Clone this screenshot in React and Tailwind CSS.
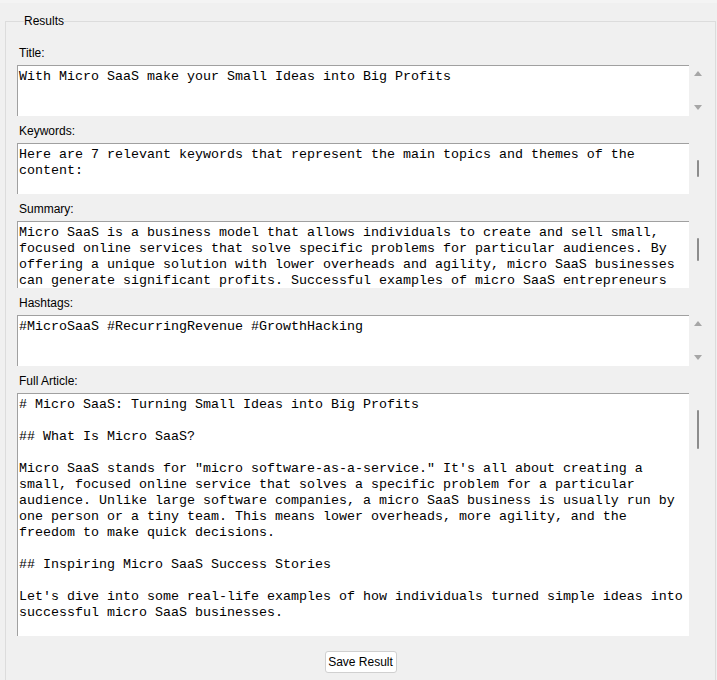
import React from "react";

const mono = { fontFamily: '"Liberation Mono", "Courier New", monospace' };

function Arrows() {
  return (
    <div className="flex h-full w-[17px] flex-col justify-between">
      <div className="flex h-[17px] items-center justify-center">
        <svg width="8" height="5" viewBox="0 0 8 5">
          <polygon points="4,0 8,5 0,5" fill="#a6a6a6" />
        </svg>
      </div>
      <div className="flex h-[17px] items-center justify-center">
        <svg width="8" height="5" viewBox="0 0 8 5">
          <polygon points="0,0 8,0 4,5" fill="#a6a6a6" />
        </svg>
      </div>
    </div>
  );
}

function Thumb({ size }) {
  return (
    <div className="flex h-full w-[17px] flex-col pt-[17px]">
      <div className={`mx-auto w-[2px] rounded-full bg-[#8c8c8c] ${size}`} />
    </div>
  );
}

function Field({ label, lines, height, bar, first }) {
  return (
    <div className="flex flex-col">
      <div className={`pl-[2px] text-[12px] leading-4 text-black ${first ? "pt-px" : "pt-[7px]"} pb-[4px]`}>
        {label}
      </div>
      <div className={`flex ${height}`}>
        <div
          className="h-full w-[672px] overflow-hidden whitespace-pre border-l border-t border-[#a0a0a0] bg-white pl-px pt-[3px] text-[13.33px] leading-4 text-black"
          style={mono}
        >
          {lines.join("\n")}
        </div>
        {bar}
      </div>
    </div>
  );
}

export default function App() {
  return (
    <div
      className="h-[680px] w-[717px] overflow-hidden bg-[#f0f0f0]"
      style={{ fontFamily: '"Liberation Sans", Arial, sans-serif' }}
    >
      <div className="h-[3px] bg-[#f4f4f4]" />
      <fieldset className="ml-[5px] mt-[10px] w-[711px] border border-[#dcdcdc] pb-[20px] pl-[11px]">
        <legend className="ml-[7px] text-[12px] leading-4 text-black">Results</legend>
        <div className="flex flex-col pt-[15px]">
          <Field
            first
            label="Title:"
            height="h-[51px]"
            bar={<Arrows />}
            lines={["With Micro SaaS make your Small Ideas into Big Profits"]}
          />
          <Field
            label="Keywords:"
            height="h-[51px]"
            bar={<Thumb size="h-[17px]" />}
            lines={[
              "Here are 7 relevant keywords that represent the main topics and themes of the",
              "content:",
            ]}
          />
          <Field
            label="Summary:"
            height="h-[67px]"
            bar={<Thumb size="h-[23px]" />}
            lines={[
              "Micro SaaS is a business model that allows individuals to create and sell small,",
              "focused online services that solve specific problems for particular audiences. By",
              "offering a unique solution with lower overheads and agility, micro SaaS businesses",
              "can generate significant profits. Successful examples of micro SaaS entrepreneurs",
            ]}
          />
          <Field
            label="Hashtags:"
            height="h-[51px]"
            bar={<Arrows />}
            lines={["#MicroSaaS #RecurringRevenue #GrowthHacking"]}
          />
          <Field
            label="Full Article:"
            height="h-[243px]"
            bar={<Thumb size="h-[39px]" />}
            lines={[
              "# Micro SaaS: Turning Small Ideas into Big Profits",
              "",
              "## What Is Micro SaaS?",
              "",
              'Micro SaaS stands for "micro software-as-a-service." It\'s all about creating a',
              "small, focused online service that solves a specific problem for a particular",
              "audience. Unlike large software companies, a micro SaaS business is usually run by",
              "one person or a tiny team. This means lower overheads, more agility, and the",
              "freedom to make quick decisions.",
              "",
              "## Inspiring Micro SaaS Success Stories",
              "",
              "Let's dive into some real-life examples of how individuals turned simple ideas into",
              "successful micro SaaS businesses.",
              "",
            ]}
          />
          <div className="flex justify-center pr-[11px] pt-[15px]">
            <button className="h-[22px] w-[72px] rounded-[3px] border border-[#d0d0d0] bg-white text-[12px] text-black">
              Save Result
            </button>
          </div>
        </div>
      </fieldset>
    </div>
  );
}
